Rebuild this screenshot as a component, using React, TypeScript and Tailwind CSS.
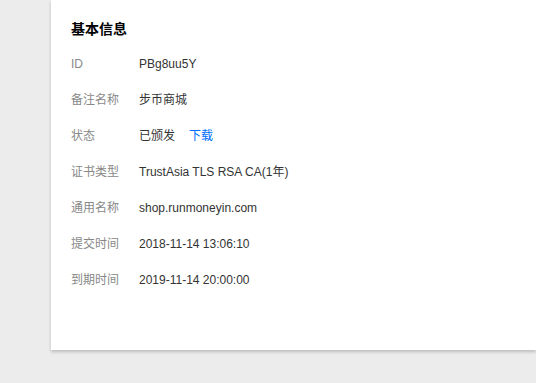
const rows: { label: string; value: string; link?: string }[] = [
  { label: "ID", value: "PBg8uu5Y" },
  { label: "备注名称", value: "步币商城" },
  { label: "状态", value: "已颁发", link: "下载" },
  { label: "证书类型", value: "TrustAsia TLS RSA CA(1年)" },
  { label: "通用名称", value: "shop.runmoneyin.com" },
  { label: "提交时间", value: "2018-11-14 13:06:10" },
  { label: "到期时间", value: "2019-11-14 20:00:00" },
]

export default function App() {
  return (
    <div
      className="w-[536px] h-[383px] bg-[#ececec] overflow-hidden"
      style={{ fontFamily: '"Liberation Sans", Arial, "Noto Sans CJK SC", sans-serif' }}
    >
      <div className="ml-[51px] h-[350px] bg-white shadow-[0_2px_3px_rgba(0,0,0,0.2)] pl-5 pt-[19px]">
        {/* Title */}
        <h3 className="text-[14px] leading-5 font-bold text-black">基本信息</h3>
        {/* Info rows */}
        <div className="mt-[7px] flex flex-col">
          {rows.map((row) => (
            <div key={row.label} className="flex items-center h-9 text-[12px]">
              <span className="w-[68px] text-[#888]">{row.label}</span>
              <span className="text-[#333]">{row.value}</span>
              {row.link && <a className="ml-3.5 text-[#006eff] cursor-pointer">{row.link}</a>}
            </div>
          ))}
        </div>
      </div>
    </div>
  )
}
